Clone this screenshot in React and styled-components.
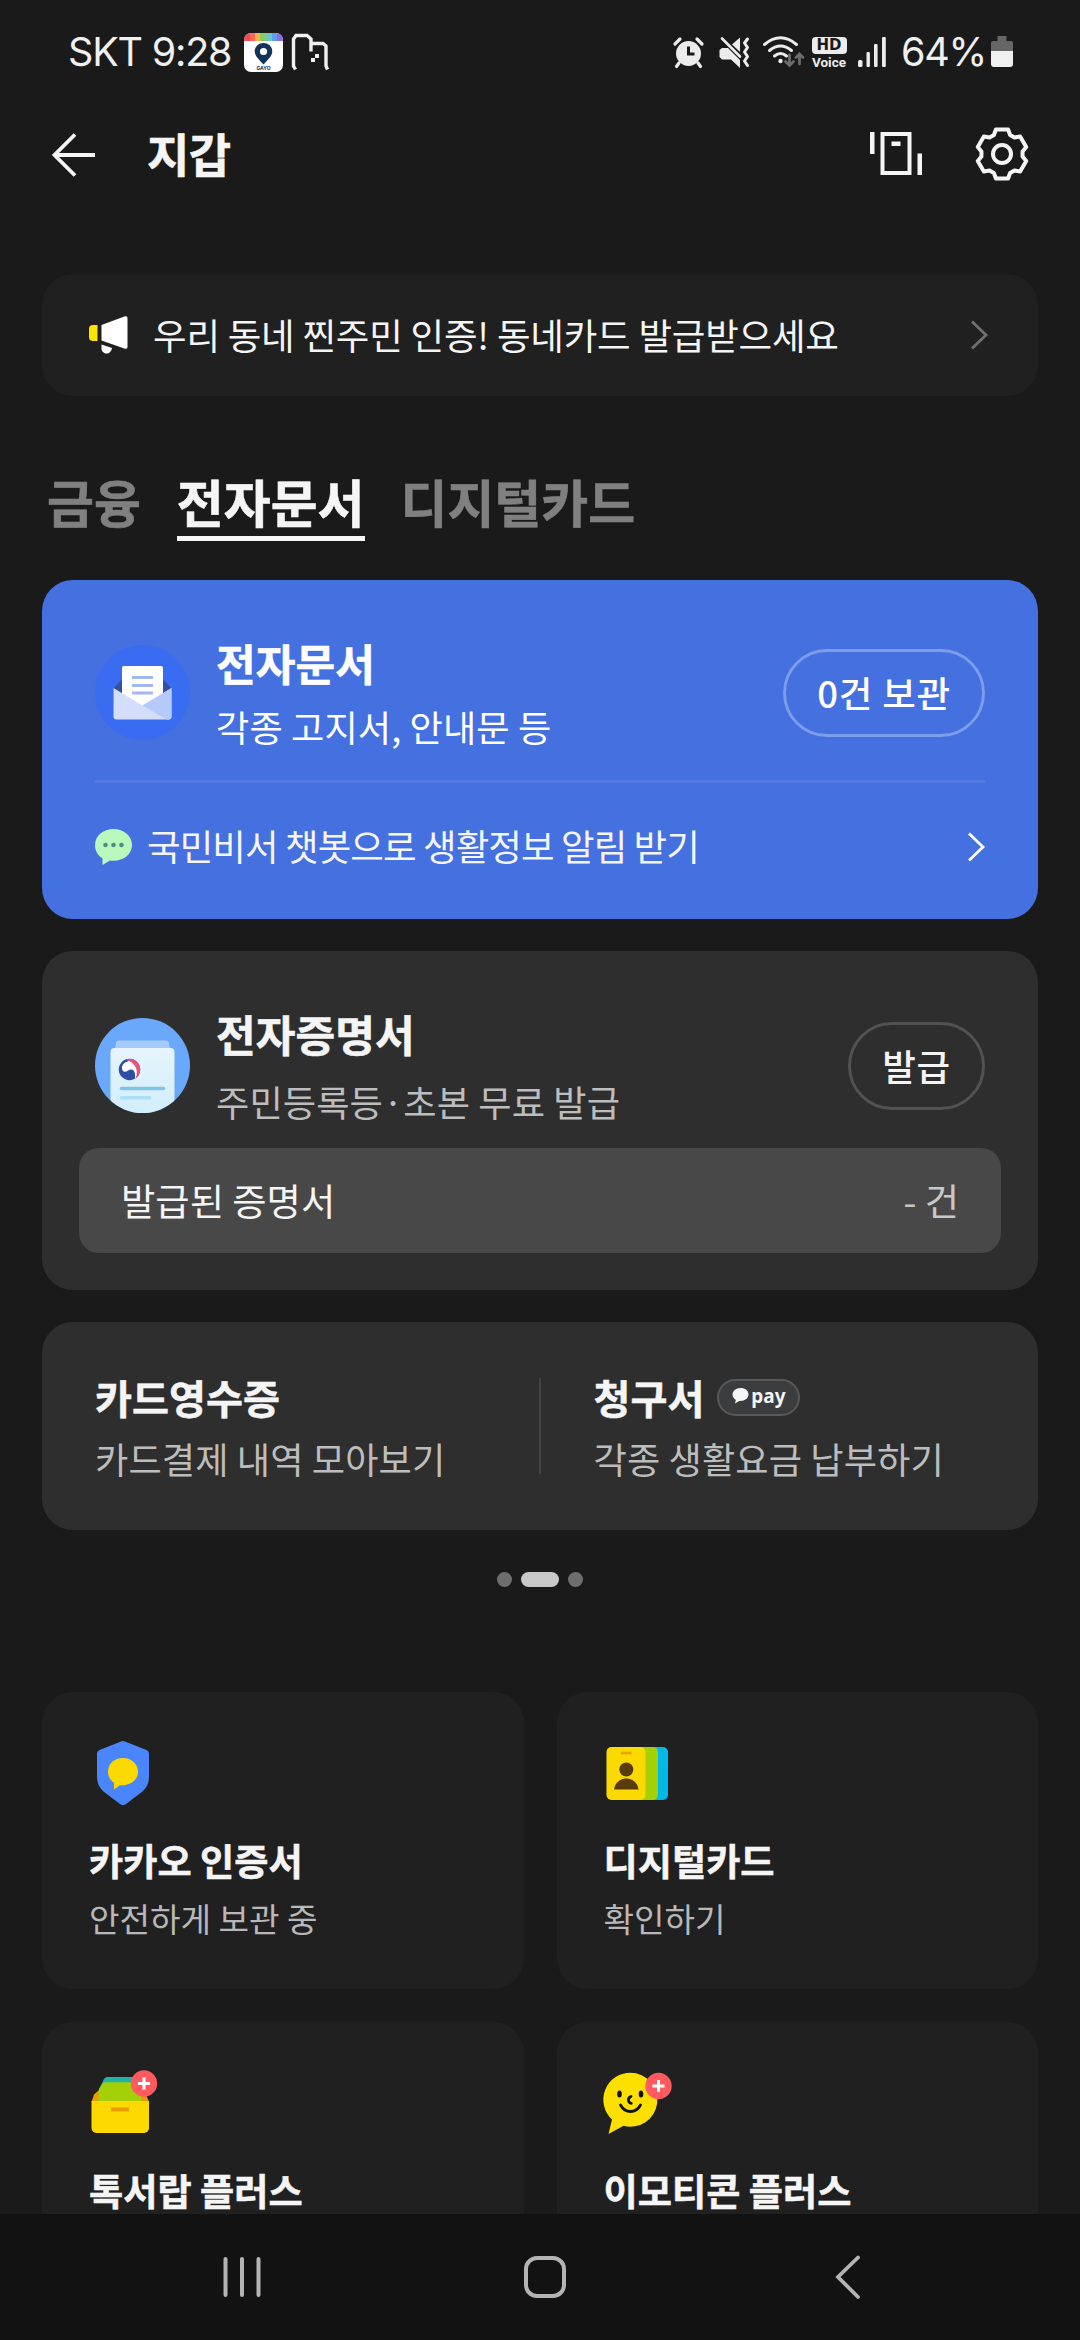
import React from "react";
import styled, { createGlobalStyle } from "styled-components";

const services = [
	{ id: "cert", title: "카카오 인증서", desc: "안전하게 보관 중", Icon: () => <ShieldIcon /> },
	{ id: "card", title: "디지털카드", desc: "확인하기", Icon: () => <IdCardIcon /> },
	{ id: "drawer", title: "톡서랍 플러스", Icon: () => <DrawerIcon /> },
	{ id: "emoticon", title: "이모티콘 플러스", Icon: () => <SmileIcon /> },
];

const App = () => {
	return (
		<Screen>
			<GlobalStyle />
			<StatusBar />
			<Header />
			<Content>
				<Banner>
					<HornIcon />
					<BannerText>우리 동네 찐주민 인증! 동네카드 발급받으세요</BannerText>
					<Chevron color="#707070" />
				</Banner>
				<Tabs>
					<Tab>금융</Tab>
					<Tab $active>전자문서</Tab>
					<Tab>디지털카드</Tab>
				</Tabs>
				<CardStack>
					<DocumentCard />
					<CertificateCard />
					<BillCard />
				</CardStack>
				<Dots>
					<Dot />
					<Dot $active />
					<Dot />
				</Dots>
				<ServiceGrid>
					{services.map(({ id, title, desc, Icon }) => (
						<ServiceCard key={id}>
							<Icon />
							<ServiceTitle>{title}</ServiceTitle>
							{desc && <ServiceDesc>{desc}</ServiceDesc>}
						</ServiceCard>
					))}
				</ServiceGrid>
			</Content>
			<NavBar />
		</Screen>
	);
};

const StatusBar = () => (
	<StyledStatusBar>
		<StatusGroup>
			<Clock>SKT 9:28</Clock>
			<AppBadge>
				<svg width="39" height="39" viewBox="0 0 39 39">
					<rect width="39" height="39" fill="#fff" />
					<rect width="6" height="8" fill="#ef4b5a" />
					<rect x="6" width="5" height="8" fill="#f4695a" />
					<rect x="11" width="5" height="8" fill="#f9b04f" />
					<rect x="16" width="6" height="8" fill="#8ccb5e" />
					<rect x="22" width="6" height="8" fill="#6fc3c0" />
					<rect x="28" width="5" height="8" fill="#5aa0ee" />
					<rect x="33" width="6" height="8" fill="#9068e8" />
					<path d="M19.5 31.500C15 26.500 10.700 23 10.700 18.300a8.700 8.300 0 0 1 17.600 0C28.300 23 24 26.500 19.500 31.500z" fill="#12345a" />
					<circle cx="19.500" cy="18.500" r="3.600" fill="#fff" />
					<text x="19.500" y="36.500" textAnchor="middle" fontSize="5" fontWeight="700" fontFamily="Inter, sans-serif" fill="#12345a">GAYO</text>
				</svg>
			</AppBadge>
			<svg width="38" height="38" viewBox="0 0 38 38" fill="none" stroke="#f0f0f0" strokeWidth="3.400">
				<path d="M4.500 36.500 2.500 33V6L5 2.500h11L20 6v12.500M20 10.500h12L35 13v20l1.500 3.500" />
				<path d="M20 25h4v4h-4zM24 21h4v4h-4z" fill="#f0f0f0" stroke="none" />
			</svg>
		</StatusGroup>
		<StatusGroup>
			<svg width="31" height="31" viewBox="0 0 31 31">
				<circle cx="15.500" cy="16.500" r="12.500" fill="#ececec" />
				<path d="M2 7l5-5M29 7l-5-5M6 26l-2.500 3.500M25 26l2.500 3.500" stroke="#ececec" strokeWidth="3.200" strokeLinecap="round" />
				<path d="M15.500 9.500v7.500h6" fill="none" stroke="#1a1a1a" strokeWidth="3" />
			</svg>
			<MuteSlot>
				<svg width="31" height="31" viewBox="0 0 31 31">
					<path d="M.5 13 3 11h6l12 12v8l-9-8.500H3L.5 20z" fill="#ececec" />
					<path d="M13 7.500 21 .5v14.500z" fill="#ececec" />
					<path d="M3 1.500 21 19.500" stroke="#ececec" strokeWidth="2.600" strokeLinecap="round" />
					<path d="M28.500 2l-3 4 3 4.500-3 4.500 3 4.500-3 4.500 3 4.500" fill="none" stroke="#ececec" strokeWidth="3" strokeLinecap="round" strokeLinejoin="round" />
				</svg>
			</MuteSlot>
			<WifiSlot>
				<svg width="41" height="32" viewBox="0 0 41 32" fill="none" stroke="#ececec" strokeWidth="3" strokeLinecap="round">
					<path d="M1.500 8.500Q17.500-5 33.500 8.500M6.500 14.500q11-9 22 0M11.500 20q6-5 12 0" />
					<circle cx="17.500" cy="25" r="2.200" fill="#ececec" stroke="none" />
					<path d="M26.500 19v10m-4-3.500 4 4 4-4M36.500 28V18m-3.500 3.500 3.500-3.500 3.500 3.500" stroke="#6b6b6b" strokeWidth="2.800" />
				</svg>
			</WifiSlot>
			<HdVoice>
				<HdTag>HD</HdTag>
				<VoiceTag>Voice</VoiceTag>
			</HdVoice>
			<SignalSlot>
				<svg width="30" height="30" viewBox="0 0 30 30" fill="#ececec">
					<rect x="1" y="23" width="4.500" height="7" rx="1.500" />
					<rect x="9.500" y="15" width="3.400" height="15" rx="1" />
					<rect x="17" y="7" width="3.600" height="23" rx="1" />
					<rect x="25" y="0" width="3.800" height="30" rx="1" />
				</svg>
			</SignalSlot>
			<Percent>64%</Percent>
			<svg width="22" height="32" viewBox="0 0 22 32">
				<path d="M6.500 0h9v5h4.500a2 2 0 0 1 2 2v9H0V7a2 2 0 0 1 2-2h4.500z" fill="#666" />
				<path d="M0 15h22v13a3 3 0 0 1-3 3H3a3 3 0 0 1-3-3z" fill="#f0f0f0" />
			</svg>
		</StatusGroup>
	</StyledStatusBar>
);

const Header = () => (
	<StyledHeader>
		<svg width="44" height="44" viewBox="0 0 44 44" fill="none" stroke="#f5f5f5" strokeWidth="3.800">
			<path d="M24 1.500 3.500 22 24 42.500M3 22h41" />
		</svg>
		<HeaderTitle>지갑</HeaderTitle>
		<HeaderActions>
			<svg width="52" height="44" viewBox="0 0 52 44">
				<path d="M0 0h4.500v22H0zM47.500 21.500H52v21.500h-4.500z" fill="#f5f5f5" />
				<rect x="12.500" y="2" width="27" height="39" fill="none" stroke="#f5f5f5" strokeWidth="4" />
				<rect x="21.500" y="9.500" width="9" height="4.500" fill="#f5f5f5" />
			</svg>
			<GearIcon />
		</HeaderActions>
	</StyledHeader>
);

const DocumentCard = () => (
	<Card $color="#4570e0" $height={339}>
		<CardTop>
			<svg width="95" height="95" viewBox="0 0 95 95">
				<circle cx="47.500" cy="47.500" r="47.500" fill="#3a6cf2" />
				<path d="M18.500 43.500 27 34h41l8.500 9.500V60h-58z" fill="#34509f" />
				<path d="M29 21h37a2 2 0 0 1 2 2v38H27V23a2 2 0 0 1 2-2z" fill="#fff" />
				<path d="M37 32.500h21M37 40.500h21M37 48h21" stroke="#a3b8f3" strokeWidth="2.800" />
				<path d="M18.500 43 47.500 60.500 76.500 43v28.500a3 3 0 0 1-3 3h-52a3 3 0 0 1-3-3z" fill="#d3defc" />
				<path d="M76.500 43v28.500a3 3 0 0 1-3 3h-2L47.500 60.500z" fill="#b5c9fa" />
			</svg>
			<CardText $gap={9}>
				<CardTitle $color="#fff">전자문서</CardTitle>
				<CardDesc $color="#fff">각종 고지서, 안내문 등</CardDesc>
			</CardText>
			<PillButton $border="#7d9cea" $color="#fff">0건 보관</PillButton>
		</CardTop>
		<ChatLink>
			<svg width="38" height="38" viewBox="0 0 38 38">
				<path d="M18.500 1C8.500 1 0 7.700 0 17c0 6 3 10.500 7.500 13.500V37l7.500-4.500c1 .2 2.300.3 3.500.3C29 32.800 37 26 37 17S29 1 18.500 1z" fill="#b9f9bd" />
				<g fill="#4e8c7c">
					<circle cx="10.500" cy="17" r="2.300" />
					<circle cx="18.500" cy="17" r="2.300" />
					<circle cx="26.500" cy="17" r="2.300" />
				</g>
			</svg>
			<span>국민비서 챗봇으로 생활정보 알림 받기</span>
			<Chevron color="#fff" />
		</ChatLink>
	</Card>
);

const CertificateCard = () => (
	<Card $color="#2e2e2e" $height={339}>
		<CardTop>
			<svg width="95" height="95" viewBox="0 0 95 95">
				<clipPath id="round">
					<circle cx="47.500" cy="47.500" r="47.500" />
				</clipPath>
				<linearGradient id="paper" x1="0" y1="0" x2="0" y2="1">
					<stop offset="0" stopColor="#e6f4fd" />
					<stop offset="1" stopColor="#d0edfc" />
				</linearGradient>
				<g clipPath="url(#round)">
					<rect width="95" height="95" fill="#69a8fa" />
					<path d="M24 22.500h47a3 3 0 0 1 3 3l2 10H19l2-10a3 3 0 0 1 3-3z" fill="#a6cbfa" />
					<rect x="15.500" y="30" width="64" height="70" rx="4" fill="url(#paper)" />
					<path d="M26.500 70.500h42" stroke="#7fc5e8" strokeWidth="3.600" strokeLinecap="round" />
					<path d="M26.500 79.700h28" stroke="#ace0f7" strokeWidth="3.600" strokeLinecap="round" />
				</g>
				<circle cx="34.500" cy="51.500" r="10.700" fill="#2b4fa4" />
				<path d="M30 44.500c5-3.500 12-1 13.500 5 1 4.500-.5 8.500-3.500 11.500.5-5 0-9.500-4-9.500-3 0-4 2.700-6.500 2.200-3.500-1-3.500-6.500.5-9.200z" fill="#fff" />
				<path d="M31 41.500c8-2 14.500 3.500 14.200 10.500-.2 4-2 7-5 9 3.500-6.500 2-15.500-9.200-19.500z" fill="#e8567a" />
			</svg>
			<CardText $gap={13}>
				<CardTitle $color="#f5f5f5">전자증명서</CardTitle>
				<CardDesc $color="#bdbdbd">주민등록등·초본 무료 발급</CardDesc>
			</CardText>
			<PillButton $border="#525252" $color="#f5f5f5">발급</PillButton>
		</CardTop>
		<IssuedRow>
			<span>발급된 증명서</span>
			<IssuedCount>- 건</IssuedCount>
		</IssuedRow>
	</Card>
);

const BillCard = () => (
	<StyledBillCard>
		<BillItem>
			<BillTitle>카드영수증</BillTitle>
			<CardDesc $color="#bdbdbd">카드결제 내역 모아보기</CardDesc>
		</BillItem>
		<BillItem $divided>
			<BillTitle>
				청구서
				<PayBadge>
					<svg width="17" height="17" viewBox="0 0 17 17">
						<path d="M8.500 1C3.800 1 .5 4 .5 7.500c0 2.300 1.300 4.200 3.300 5.400L3 16.500l4.200-2.600c5.300.5 9.300-2.500 9.300-6.400S13.200 1 8.500 1z" fill="#f5f5f5" />
					</svg>
					pay
				</PayBadge>
			</BillTitle>
			<CardDesc $color="#bdbdbd">각종 생활요금 납부하기</CardDesc>
		</BillItem>
	</StyledBillCard>
);

const NavBar = () => (
	<StyledNavBar>
		<svg width="44" height="44" viewBox="0 0 44 44" stroke="#b4b4b4" strokeWidth="4" strokeLinecap="round">
			<path d="M5.500 4v36M22 4v36M38.500 4v36" />
		</svg>
		<svg width="44" height="44" viewBox="0 0 44 44" fill="none" stroke="#b4b4b4" strokeWidth="4">
			<rect x="3" y="3" width="38" height="38" rx="11" />
		</svg>
		<svg width="44" height="44" viewBox="0 0 44 44" fill="none" stroke="#b4b4b4" strokeWidth="3.800" strokeLinecap="round">
			<path d="M32 2.500 12 22 32 42" />
		</svg>
	</StyledNavBar>
);

const Chevron = ({ color }) => (
	<svg width="18" height="30" viewBox="0 0 18 30" fill="none" stroke={color} strokeWidth="2.800">
		<path d="M2 1.500 16 15 2 28.500" />
	</svg>
);

const HornIcon = () => (
	<svg width="39" height="38" viewBox="0 0 39 38">
		<path d="M4 9h4.500v16H4a4 4 0 0 1-4-4v-8a4 4 0 0 1 4-4z" fill="#fde500" />
		<path d="M12.500 9 36 .3a1.800 1.800 0 0 1 2.500 1.700v29a1.800 1.800 0 0 1-2.500 1.700L12.500 24.500z" fill="#fff" />
		<path d="M12.500 28.500 23 32c-.5 3.500-3 5.500-5.500 5.500-3 0-5-2.500-5-5z" fill="#fff" />
	</svg>
);

// six teeth, each one a flat top and a flat valley
const gearPoints = Array.from({ length: 6 }, (_, i) =>
	[
		[-14, 25.2],
		[14, 25.2],
		[23, 20.7],
		[37, 20.7],
	].map(([offset, r]) => {
		const a = ((i * 60 + offset - 90) * Math.PI) / 180;
		return `${(28 + r * Math.cos(a)).toFixed(2)},${(28 + r * Math.sin(a)).toFixed(2)}`;
	})
)
	.flat()
	.join(" ");

const GearIcon = () => (
	<svg width="56" height="56" viewBox="0 0 56 56" fill="none" stroke="#f5f5f5" strokeWidth="4" strokeLinejoin="round">
		<polygon points={gearPoints} />
		<circle cx="28" cy="28" r="9" />
	</svg>
);

const PlusBadge = ({ x, y }) => (
	<g>
		<circle cx={x} cy={y} r="13.200" fill="#ff5a5f" />
		<path d={`M${x - 6} ${y}h12M${x} ${y - 6}v12`} stroke="#fff" strokeWidth="3" />
	</g>
);

const ShieldIcon = () => (
	<ServiceIcon viewBox="0 0 72 72">
		<path d="M32 7.500a5 5 0 0 1 4 0L57.500 16a4 4 0 0 1 2.500 3.500V42c0 7-2 11-6.500 15.500L37 70a5 5 0 0 1-6 0L14.500 57.500C10 53 8 49 8 42V19.500A4 4 0 0 1 10.500 16z" fill="#4a85fb" />
		<path d="M34 24c-8.500 0-15 5.700-15 13.800 0 4.700 2.200 8.300 6 10.900v6.800l6-4.300c10.500.8 18-5.400 18-13.400S42.500 24 34 24z" fill="#fcd900" />
	</ServiceIcon>
);

const IdCardIcon = () => (
	<ServiceIcon viewBox="0 0 72 72">
		<rect x="30" y="13" width="34" height="53" rx="5" fill="#00b8ea" />
		<rect x="20" y="13" width="34" height="53" rx="5" fill="#a4d007" />
		<rect x="2.500" y="13" width="39" height="53" rx="5" fill="#fcd900" />
		<path d="M17 19h10.500" stroke="#e7a100" strokeWidth="2.600" />
		<circle cx="22.300" cy="35.500" r="7" fill="#5a3c0c" />
		<path d="M10 55.500c1-7 6-11 12.300-11s11.200 4 12.200 11z" fill="#5a3c0c" />
	</ServiceIcon>
);

const DrawerIcon = () => (
	<ServiceIcon viewBox="0 0 72 72">
		<path d="M2.500 38 5 30.500 9 27h44l4 3.500L60 38z" fill="#ed9a00" />
		<path d="M10 25 15 15a4 4 0 0 1 3.500-2H48v12z" fill="#20b2a8" />
		<path d="M9.500 38V26l4-6.500a3 3 0 0 1 2.500-1.200H52V38z" fill="#a4d007" />
		<path d="M2.500 37h57.500v27a5 5 0 0 1-5 5H7.500a5 5 0 0 1-5-5z" fill="#fcd900" />
		<path d="M22 45.500h18" stroke="#e79f00" strokeWidth="4" />
		<PlusBadge x={55} y={19.5} />
	</ServiceIcon>
);

const SmileIcon = () => (
	<ServiceIcon viewBox="0 0 72 72">
		<path d="M26.500 8.700a27 27 0 1 1-7 53.100L4.500 70 8 55.500A27 27 0 0 1 26.500 8.700z" fill="#fde000" />
		<ellipse cx="15.500" cy="30" rx="2.300" ry="3.500" fill="#111" />
		<ellipse cx="37" cy="30" rx="2.300" ry="3.500" fill="#111" />
		<path d="M27 32.500q-3 1-2.500 4 .2 2.500 2.800 2.800M16.500 41q3.500 6.500 10 6.500t10-6.500" fill="none" stroke="#111" strokeWidth="2.800" strokeLinecap="round" />
		<PlusBadge x={54.5} y={22} />
	</ServiceIcon>
);

export default App;

const GlobalStyle = createGlobalStyle`
	* {
		box-sizing: border-box;
	}

	body {
		margin: 0;
		background-color: #1a1a1a;
	}

	svg {
		display: block;
		flex-shrink: 0;
		overflow: visible;
	}
`;

const Screen = styled.div`
	display: flex;
	flex-direction: column;
	width: 1080px;
	height: 2340px;
	overflow: hidden;
	background-color: #1a1a1a;
	color: #f5f5f5;
	font-family: "Noto Sans CJK KR", sans-serif;
	white-space: nowrap;
`;

const StyledStatusBar = styled.div`
	display: flex;
	justify-content: space-between;
	align-items: center;
	height: 104px;
	padding: 0 67px 0 68px;
`;

const StatusGroup = styled.div`
	display: flex;
	align-items: center;
	height: 40px;
`;

const Clock = styled.span`
	width: 176px;
	font-family: Inter, sans-serif;
	font-size: 39.5px;
	letter-spacing: -1.2px;
	color: #f0f0f0;
`;

const AppBadge = styled.div`
	width: 39px;
	height: 39px;
	margin-right: 8px;
	border-radius: 7px;
	overflow: hidden;
`;

const MuteSlot = styled.div`
	margin-left: 15px;
`;

const WifiSlot = styled.div`
	margin-left: 13px;
`;

const HdVoice = styled.div`
	display: flex;
	flex-direction: column;
	align-items: center;
	width: 36px;
	height: 30px;
	margin-left: 7px;
	font-family: Roboto, sans-serif;
	font-weight: 700;
`;

const HdTag = styled.span`
	width: 35px;
	height: 17px;
	border-radius: 4px;
	background-color: #ececec;
	color: #1a1a1a;
	font-family: "DejaVu Sans", sans-serif;
	font-size: 15px;
	line-height: 17px;
	text-align: center;
`;

const VoiceTag = styled.span`
	font-size: 13.5px;
	line-height: 17px;
	color: #ececec;
`;

const SignalSlot = styled.div`
	margin-left: 10px;
`;

const Percent = styled.span`
	width: 90px;
	margin-left: 14px;
	font-family: Inter, sans-serif;
	font-size: 39.5px;
	letter-spacing: -1.2px;
	color: #f0f0f0;
`;

const StyledHeader = styled.div`
	display: flex;
	align-items: center;
	height: 101px;
	padding: 0 50px 0 51px;
`;

const HeaderTitle = styled.h1`
	margin: 0 0 5px 52px;
	font-size: 46px;
	line-height: 60px;
	font-weight: 700;
	letter-spacing: -0.5px;
	-webkit-text-stroke: 0.6px currentColor;
`;

const HeaderActions = styled.div`
	display: flex;
	align-items: center;
	gap: 52px;
	margin: 0 0 1px auto;
`;

const Content = styled.div`
	flex: 1;
	min-height: 0;
	overflow: hidden;
	padding: 69px 42px 0;
`;

const Banner = styled.div`
	display: flex;
	align-items: center;
	height: 122px;
	padding: 0 50px 0 47px;
	border-radius: 31px;
	background-color: #202020;
`;

const BannerText = styled.span`
	flex: 1;
	margin: 0 0 2px 25px;
	font-size: 36.5px;
	letter-spacing: -0.2px;
`;

const Tabs = styled.div`
	display: flex;
	align-items: flex-start;
	gap: 36px;
	height: 184px;
	padding: 72px 0 0 5px;
`;

const Tab = styled.span`
	height: 73px;
	font-size: 51px;
	line-height: 66px;
	font-weight: 700;
	-webkit-text-stroke: 0.6px currentColor;
	border-bottom: 5px solid ${({ $active }) => ($active ? "#f5f5f5" : "transparent")};
	color: ${({ $active }) => ($active ? "#f5f5f5" : "#808080")};
`;

const CardStack = styled.div`
	display: flex;
	flex-direction: column;
	gap: 32px;
`;

const Card = styled.section`
	display: flex;
	flex-direction: column;
	height: ${({ $height }) => $height}px;
	padding: 52px 37px 0;
	border-radius: 31px;
	background-color: ${({ $color }) => $color};
`;

const CardTop = styled.div`
	display: flex;
	align-items: center;
	padding: 1px 16px 0;
`;

const CardText = styled.div`
	display: flex;
	flex-direction: column;
	gap: ${({ $gap }) => $gap}px;
	flex: 1;
	margin: -1px 0 1px 26px;
`;

const CardTitle = styled.h2`
	margin: 0;
	font-size: 43.2px;
	line-height: 60px;
	font-weight: 700;
	-webkit-text-stroke: 0.5px currentColor;
	color: ${({ $color }) => $color};
`;

const CardDesc = styled.p`
	margin: 0;
	font-size: 36.2px;
	line-height: 50px;
	letter-spacing: 0.1px;
	color: ${({ $color }) => $color};
`;

const PillButton = styled.button`
	height: 88px;
	padding: 0 31px;
	border: 3px solid ${({ $border }) => $border};
	border-radius: 44px;
	background: none;
	color: ${({ $color }) => $color};
	font-family: inherit;
	font-size: 36.5px;
	font-weight: 500;
	line-height: 80px;
	letter-spacing: 0.8px;
`;

const ChatLink = styled.div`
	display: flex;
	align-items: center;
	height: 130px;
	margin: 28px 16px 0;
	border-top: 3px solid #5379e3;
	font-size: 36.5px;

	span {
		flex: 1;
		margin: 0 0 3px 14px;
		letter-spacing: -0.9px;
	}
`;

const IssuedRow = styled.div`
	display: flex;
	justify-content: space-between;
	align-items: center;
	height: 105px;
	margin-top: 21px;
	padding: 0 42px 2px;
	border-radius: 20px;
	background-color: #484848;
	font-size: 37.3px;
`;

const IssuedCount = styled.span`
	color: #c8c8c8;
`;

const StyledBillCard = styled.section`
	display: flex;
	align-items: center;
	height: 208px;
	padding-left: 53px;
	border-radius: 31px;
	background-color: #2e2e2e;
`;

const BillItem = styled.div`
	display: flex;
	flex-direction: column;
	justify-content: center;
	gap: 8px;
	width: ${({ $divided }) => ($divided ? "500px" : "444px")};
	height: 96px;
	padding-left: ${({ $divided }) => ($divided ? "53px" : "0")};
	border-left: ${({ $divided }) => ($divided ? "2px solid #444" : "none")};
`;

const BillTitle = styled.h3`
	display: flex;
	align-items: center;
	gap: 13px;
	margin: 0;
	font-size: 40.2px;
	line-height: 56px;
	font-weight: 700;
	-webkit-text-stroke: 0.5px currentColor;
`;

const PayBadge = styled.span`
	display: flex;
	justify-content: center;
	align-items: center;
	gap: 2px;
	width: 83px;
	height: 37px;
	border: 2px solid #585858;
	border-radius: 19px;
	background-color: #3b3c3e;
	font-family: "Noto Sans", sans-serif;
	font-size: 19px;
	line-height: 30px;
	padding-bottom: 3px;
	-webkit-text-stroke: 0;
`;

const Dots = styled.div`
	display: flex;
	justify-content: center;
	gap: 9px;
	padding-top: 42px;
`;

const Dot = styled.span`
	width: ${({ $active }) => ($active ? 38 : 15)}px;
	height: 15px;
	border-radius: 8px;
	background-color: ${({ $active }) => ($active ? "#c8c8c8" : "#6e6e6e")};
`;

const ServiceGrid = styled.div`
	display: grid;
	grid-template-columns: 1fr 1fr;
	gap: 33px;
	padding-top: 105px;
`;

const ServiceCard = styled.div`
	height: 297px;
	padding: 42px 47px 0;
	border-radius: 31px;
	background-color: #202020;
`;

const ServiceIcon = styled.svg`
	width: 72px;
	height: 72px;
`;

const ServiceTitle = styled.h3`
	margin: 31px 0 12px;
	font-size: 37.2px;
	line-height: 46px;
	font-weight: 700;
	-webkit-text-stroke: 0.5px currentColor;
`;

const ServiceDesc = styled.p`
	margin: 0;
	font-size: 33.2px;
	line-height: 46px;
	color: #b8b8b8;
`;

const StyledNavBar = styled.div`
	display: flex;
	justify-content: space-between;
	align-items: center;
	flex-shrink: 0;
	height: 126px;
	padding: 0 210px 0 220px;
	background-color: #121212;
`;
